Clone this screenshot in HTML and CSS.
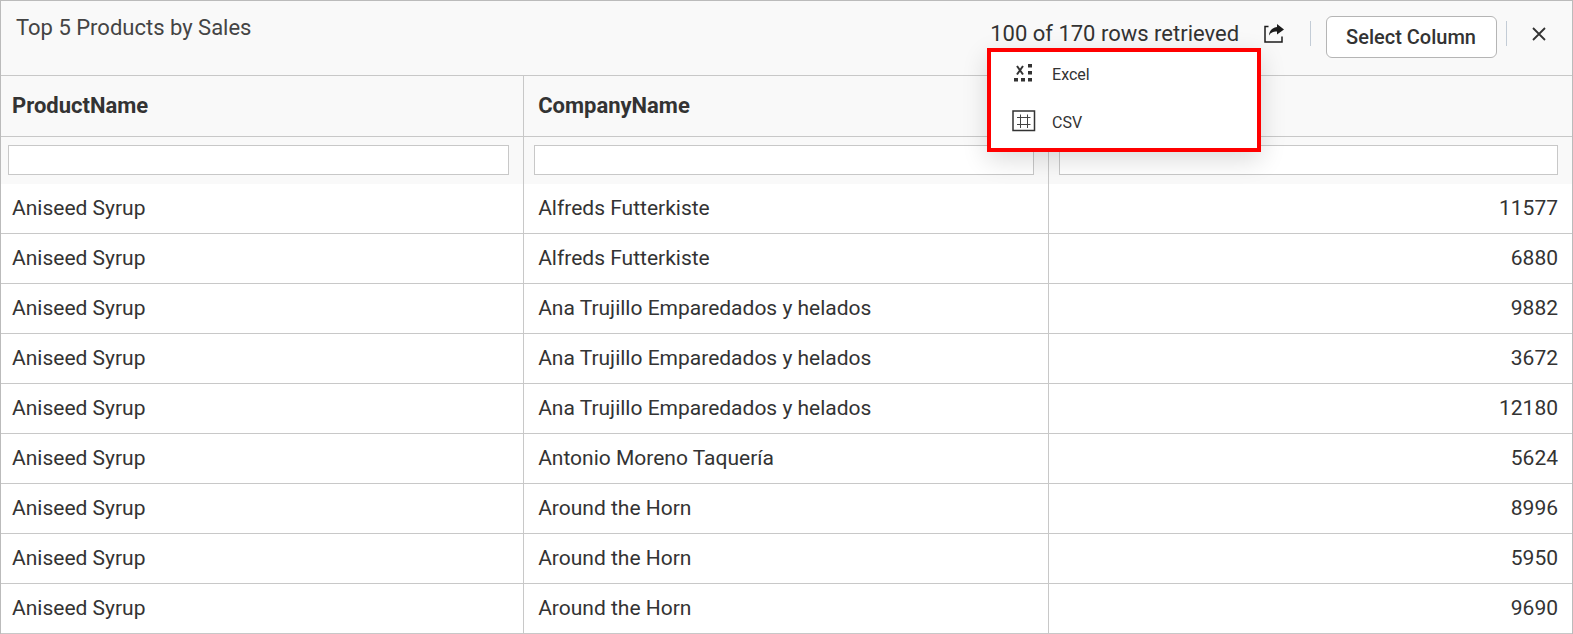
FILE: index.html
```
<!DOCTYPE html>
<html lang="en">
    <head>
        <meta charset="utf-8">
        <title>Top 5 Products by Sales</title>
        <link rel="stylesheet" href="styles.css">
    </head>
    <body>
        <div class="dialog">
            <div class="header">
                <div class="title">Top 5 Products by Sales</div>
                <div class="tools">
                    <span class="rowCount">100 of 170 rows retrieved</span>
                    <div class="export">
                        <button type="button" class="iconButton" aria-label="Export">
                            <svg width="20" height="20" viewBox="0 0 20 20">
                                <path d="M4.5 2.5H1V18H18V12.5" fill="none" stroke="#1c1c1c" stroke-width="1.5"/>
                                <path d="M5 11.500C5.200 6.500 8.500 3.500 13 3V0L20 5.500L13 10.500V7.500C9.500 7 7 8.300 5 11.500Z" fill="#1c1c1c"/>
                            </svg>
                        </button>
                        <div class="menu">
                            <button type="button" class="menuItem">
                                <svg width="24" height="24" viewBox="0 0 24 24">
                                    <path d="M5 4L11 12.500M11 4L5 12.500" stroke="#333" stroke-width="2" fill="none"/>
                                    <path d="M16 2h4v3.500h-4zM16 9h4v3.500h-4zM16 16h4v3.500h-4zM9 16h4v3.500H9zM2 16h4v3.500H2z" fill="#333"/>
                                </svg>
                                Excel
                            </button>
                            <button type="button" class="menuItem">
                                <svg width="24" height="24" viewBox="0 0 24 24">
                                    <path d="M1 1H22.500V20.500H1Z" stroke="#333" stroke-width="1.500" fill="none"/>
                                    <path d="M5 7.500H18.500M5 14.500H18.500M8.500 4.500V18M15.500 4.500V18" stroke="#444" fill="none"/>
                                </svg>
                                CSV
                            </button>
                        </div>
                    </div>
                    <span class="line"></span>
                    <button type="button" class="selectButton">Select Column</button>
                    <span class="line"></span>
                    <button type="button" class="iconButton close" aria-label="Close">
                        <svg width="14" height="14" viewBox="0 0 14 14">
                            <path d="M1 1L13 13M13 1L1 13" stroke="#333" stroke-width="1.800" fill="none"/>
                        </svg>
                    </button>
                </div>
            </div>

            <table class="grid">
                <colgroup>
                    <col class="productCol">
                    <col class="companyCol">
                    <col>
                </colgroup>
                <thead>
                    <tr class="names">
                        <th>ProductName</th>
                        <th>CompanyName</th>
                        <th></th>
                    </tr>
                    <tr class="filters">
                        <td><input type="text" aria-label="Filter ProductName"></td>
                        <td><input type="text" aria-label="Filter CompanyName"></td>
                        <td><input type="text" aria-label="Filter value"></td>
                    </tr>
                </thead>
                <tbody>
                    <tr><td>Aniseed Syrup</td><td>Alfreds Futterkiste</td><td>11577</td></tr>
                    <tr><td>Aniseed Syrup</td><td>Alfreds Futterkiste</td><td>6880</td></tr>
                    <tr><td>Aniseed Syrup</td><td>Ana Trujillo Emparedados y helados</td><td>9882</td></tr>
                    <tr><td>Aniseed Syrup</td><td>Ana Trujillo Emparedados y helados</td><td>3672</td></tr>
                    <tr><td>Aniseed Syrup</td><td>Ana Trujillo Emparedados y helados</td><td>12180</td></tr>
                    <tr><td>Aniseed Syrup</td><td>Antonio Moreno Taquería</td><td>5624</td></tr>
                    <tr><td>Aniseed Syrup</td><td>Around the Horn</td><td>8996</td></tr>
                    <tr><td>Aniseed Syrup</td><td>Around the Horn</td><td>5950</td></tr>
                    <tr><td>Aniseed Syrup</td><td>Around the Horn</td><td>9690</td></tr>
                </tbody>
            </table>
        </div>
    </body>
</html>
```
FILE: styles.css
```
*{
    box-sizing: border-box;
}
body{
    margin: 0;
    font-family: Roboto, "Liberation Sans", sans-serif;
    font-size: 21px;
    line-height: 24px;
    color: #333;
}
button{
    font-family: inherit;
    color: inherit;
    cursor: pointer;
}
svg{
    display: block;
    flex: none;
}
.dialog{
    border: 1px solid #bbb;
    border-bottom: none;
    background: #fff;
}
.header{
    display: flex;
    justify-content: space-between;
    height: 75px;
    padding: 15px 26px 0 15px;
    background: #f9f9f9;
    border-bottom: 1px solid #c8c8c8;
    font-size: 22px;
}
.title{
    color: #444;
}
.tools{
    display: flex;
    align-items: flex-start;
}
.rowCount{
    margin: 6px 25px 0 0;
}
.export{
    position: relative;
    margin: 8px 26px 0 0;
}
.iconButton{
    display: block;
    padding: 0;
    border: none;
    background: none;
}
.menu{
    position: absolute;
    top: 24px;
    right: 23px;
    z-index: 1;
    width: 274px;
    display: flex;
    flex-direction: column;
    gap: 4px;
    padding-bottom: 4px;
    border: 4px solid #f00;
    background: #fff;
    box-shadow: 0 8px 24px rgba(0, 0, 0, 0.14);
}
.menuItem{
    display: flex;
    align-items: center;
    gap: 16px;
    height: 44px;
    padding: 0 21px;
    border: none;
    background: none;
    font-size: 16px;
}
.line{
    width: 1px;
    height: 25px;
    margin-top: 5px;
    background: #c3ccd6;
}
.selectButton{
    height: 42px;
    margin: 0 9px 0 15px;
    padding: 0 20px 0 19px;
    border: 1px solid #b5b5b5;
    border-radius: 6px;
    background: #fff;
    font-size: 20px;
    font-weight: 500;
}
.close{
    margin: 11px 0 0 25px;
}
.grid{
    width: 100%;
    table-layout: fixed;
    border-collapse: separate;
    border-spacing: 0;
}
.productCol{
    width: 33.3%;
}
.companyCol{
    width: 33.4%;
}
.grid th,
.grid td{
    height: 50px;
    padding: 0 14px 1px;
    border-bottom: 1px solid #c8c8c8;
    border-right: 1px solid #c8c8c8;
    text-align: left;
}
.grid th:first-child,
.grid td:first-child{
    padding-left: 11px;
}
.grid th:last-child,
.grid td:last-child{
    border-right: none;
    text-align: right;
}
.grid .names th{
    height: 61px;
    background: #f9f9f9;
    font-size: 22px;
    font-weight: 700;
}
.grid .filters td{
    height: 47px;
    padding: 0 14px 1px 10px;
    border-bottom: none;
    background: #f9f9f9;
}
.grid .filters td:first-child{
    padding-left: 7px;
}
.filters input{
    display: block;
    width: 100%;
    height: 30px;
    border: 1px solid #c8c8c8;
    background: #fff;
    font: inherit;
}
```
